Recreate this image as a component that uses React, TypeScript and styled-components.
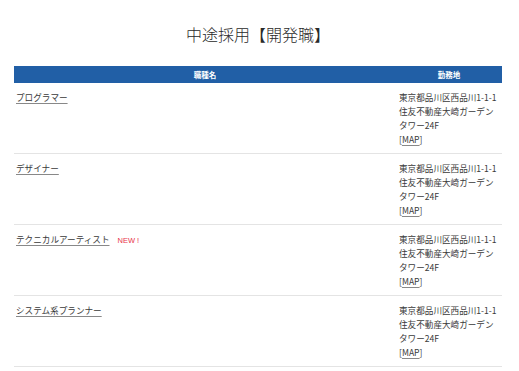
import React from "react";
import styled, { createGlobalStyle } from "styled-components";

const Global = createGlobalStyle`
  html, body { margin: 0; padding: 0; background: #fff; }
  body {
    font-family: "Noto Sans CJK JP", "Noto Sans", sans-serif;
    color: #333;
  }
`;

const Page = styled.div`
  padding: 22px 17px 0 14px;
`;

const Title = styled.h1`
  margin: 0 0 20px;
  font-size: 16px;
  line-height: 24px;
  font-weight: 300;
  text-align: center;
  color: #2a2a2a;
`;

const Table = styled.div`
  display: grid;
  grid-template-columns: 1fr 106px;
`;

const HeadCell = styled.div`
  background: #215fa6;
  color: #fff;
  font-size: 7.5px;
  font-weight: 700;
  line-height: 17px;
  height: 17px;
  text-align: center;
`;

const Cell = styled.div<{ $right?: boolean }>`
  border-bottom: 1px solid #e4e4e4;
  padding: ${(p) => (p.$right ? "7px 3px 7px 3px" : "7px 3px 7px 2px")};
  font-size: 8.6px;
  line-height: 14px;
  min-height: 56px;
  color: #3a3a3a;
`;

const Link = styled.a`
  color: #3a3a3a;
  text-decoration: underline;
  text-decoration-color: #888;
  text-underline-offset: 2px;
`;

const NewBadge = styled.span`
  margin-left: 8px;
  color: #e8334a;
  font-size: 7.5px;
  font-weight: 400;
  font-family: "Liberation Sans", "Noto Sans", sans-serif;
`;

const Line = styled.div``;

const jobs = [
  { name: "プログラマー", isNew: false },
  { name: "デザイナー", isNew: false },
  { name: "テクニカルアーティスト", isNew: true },
  { name: "システム系プランナー", isNew: false },
];

export default function App() {
  return (
    <>
      <Global />
      <Page>
        <Title>中途採用【開発職】</Title>
        <Table>
          <HeadCell>職種名</HeadCell>
          <HeadCell>勤務地</HeadCell>
          {jobs.map((j) => (
            <React.Fragment key={j.name}>
              <Cell>
                <Link href="#">{j.name}</Link>
                {j.isNew && <NewBadge>NEW !</NewBadge>}
              </Cell>
              <Cell $right>
                <Line>東京都品川区西品川1-1-1</Line>
                <Line>住友不動産大崎ガーデン</Line>
                <Line>タワー24F</Line>
                <Line>
                  [<Link href="#">MAP</Link>]
                </Line>
              </Cell>
            </React.Fragment>
          ))}
        </Table>
      </Page>
    </>
  );
}
